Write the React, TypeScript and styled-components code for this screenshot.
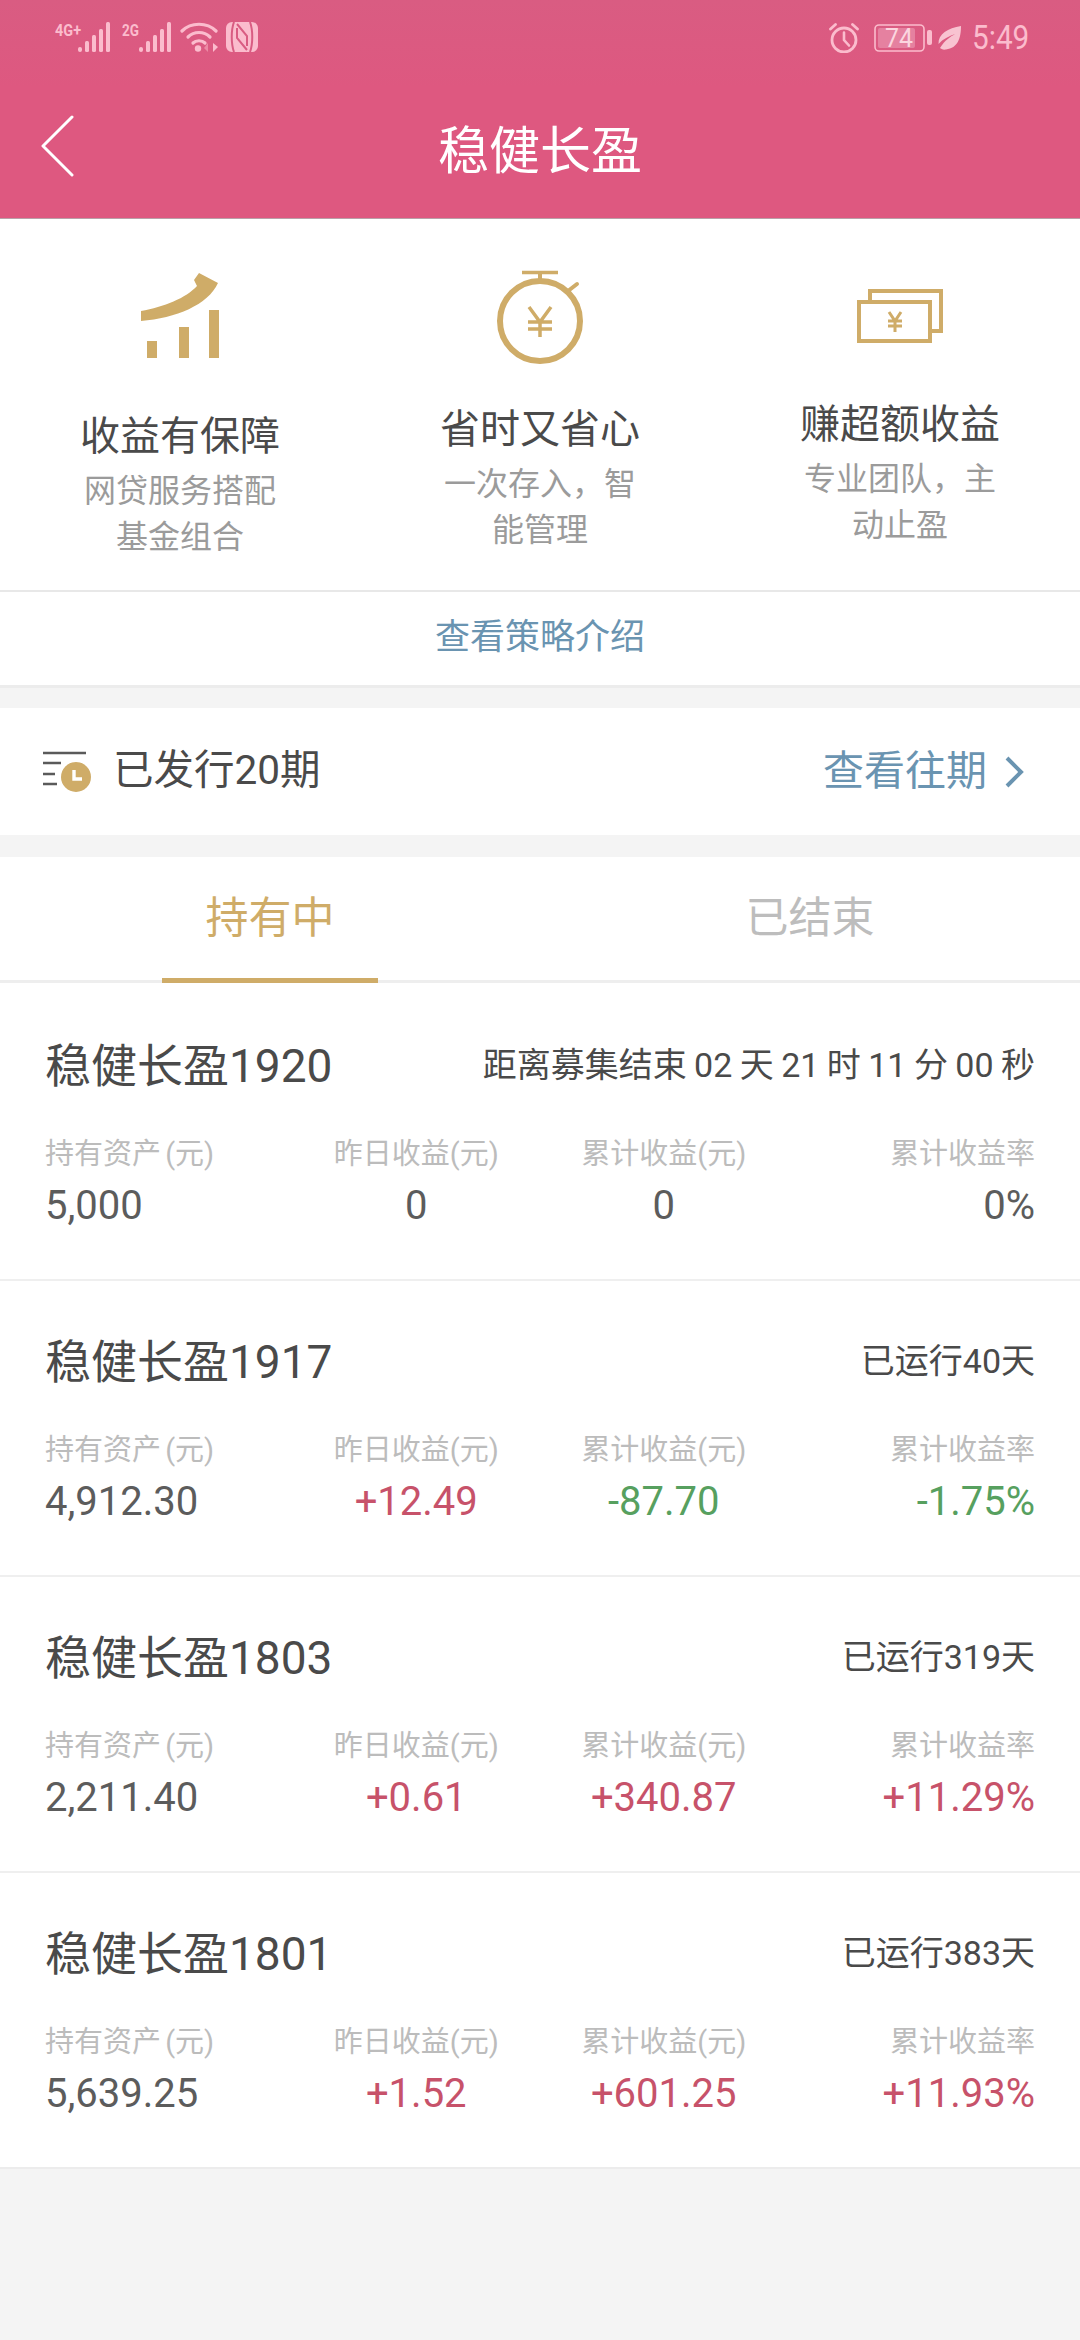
import React from 'react';
import styled, { createGlobalStyle } from 'styled-components';

const GlobalStyle = createGlobalStyle`
  html, body {
    margin: 0;
    padding: 0;
    background: #f4f4f4;
    font-family: Roboto, "Noto Sans CJK SC", sans-serif;
    font-weight: 400;
  }
  * { box-sizing: border-box; }
`;

const GOLD = '#cfac68';
const BLUE = '#6a94b1';
const PINK = '#fbbccd';

const Page = styled.div`
  width: 1080px;
  height: 2340px;
  background: #f4f4f4;
  overflow: hidden;
`;

const Top = styled.header`
  height: 219px;
  background: linear-gradient(#d95c82, #de5880 40%);
  border-bottom: 1px solid #b9a0a8;
`;

const StatusBar = styled.div`
  height: 72px;
  padding: 22px 53px 0 55px;
  display: flex;
  justify-content: space-between;
  align-items: flex-start;
  color: ${PINK};
`;

const StatusGroup = styled.div`
  display: flex;
  align-items: center;
`;

const Clock = styled.span`
  font-size: 33px;
  line-height: 32px;
  display: inline-block;
  width: 55px;
  margin-left: 10px;
  transform: scaleX(0.9);
  transform-origin: left center;
  white-space: nowrap;
`;

const NavBar = styled.div`
  position: relative;
  height: 146px;
  display: flex;
  align-items: center;
  justify-content: center;
`;

const BackIcon = styled.svg`
  position: absolute;
  left: 40px;
  top: 43px;
`;

const NavTitle = styled.h1`
  margin: 13px 0 0;
  font-size: 51px;
  font-weight: 400;
  line-height: 60px;
  color: #fff;
`;

const Intro = styled.section`
  background: #fff;
  border-bottom: 3px solid #ececec;
  margin-bottom: 20px;
`;

const Features = styled.div`
  height: 373px;
  padding-top: 45px;
  display: grid;
  grid-template-columns: repeat(3, 1fr);
  border-bottom: 2px solid #e8e8e8;
`;

const Feature = styled.div`
  display: flex;
  flex-direction: column;
  align-items: center;
`;

const FeatureIcon = styled.div<{ $height: number; $top: number }>`
  height: ${({ $height }) => $height}px;
  padding-top: ${({ $top }) => $top}px;
  display: flex;
  justify-content: center;
  align-items: flex-start;
`;

const FeatureTitle = styled.div`
  font-size: 40px;
  line-height: 52px;
  color: #4a4a4a;
`;

const FeatureText = styled.div`
  width: 200px;
  margin-top: 5px;
  font-size: 32px;
  line-height: 46px;
  text-align: center;
  color: #9b9b9b;
`;

const StrategyLink = styled.div`
  height: 93px;
  padding-bottom: 11px;
  display: flex;
  align-items: center;
  justify-content: center;
  font-size: 35px;
  color: ${BLUE};
`;

const IssueBar = styled.section`
  height: 127px;
  margin-bottom: 22px;
  padding: 0 55px 0 43px;
  background: #fff;
  display: flex;
  align-items: center;
  justify-content: space-between;
`;

const IssueInfo = styled.div`
  display: flex;
  align-items: center;
  font-size: 40.5px;
  color: #4a4a4a;
`;

const IssueText = styled.span`
  margin: 0 0 10px 21px;
`;

const PastLink = styled.div`
  display: flex;
  align-items: center;
  font-size: 41px;
  color: ${BLUE};
`;

const PastText = styled.span`
  margin-bottom: 10px;
`;

const Tabs = styled.div`
  height: 126px;
  background: #fff;
  display: grid;
  grid-template-columns: 1fr 1fr;
  border-bottom: 3px solid #eeeeee;
`;

const Tab = styled.div<{ $active?: boolean }>`
  position: relative;
  display: flex;
  align-items: center;
  justify-content: center;
  padding-bottom: 9px;
  font-size: 43px;
  color: ${({ $active }) => ($active ? GOLD : '#bdbdbd')};
  &::after {
    content: '';
    display: ${({ $active }) => ($active ? 'block' : 'none')};
    position: absolute;
    left: 162px;
    bottom: -3px;
    width: 216px;
    height: 5px;
    background: ${GOLD};
  }
`;

const List = styled.div`
  padding-top: 2px;
  background: #fff;
  border-bottom: 2px solid #ececec;
`;

const Row = styled.article`
  height: 296px;
  padding: 42px 45px 0;
  border-bottom: 2px solid #efefef;
  &:last-child {
    border-bottom: 0;
    height: 294px;
  }
`;

const RowHead = styled.div`
  height: 70px;
  display: flex;
  align-items: center;
  justify-content: space-between;
`;

const RowTitle = styled.div`
  font-size: 46px;
  color: #4a4a4a;
`;

const RowMeta = styled.div`
  font-size: 34px;
  word-spacing: -1px;
  color: #4a4a4a;
`;

const Stats = styled.div`
  margin-top: 37px;
  display: grid;
  grid-template-columns: repeat(4, 1fr);
`;

const Stat = styled.div<{ $align: string }>`
  display: flex;
  flex-direction: column;
  text-align: ${({ $align }) => $align};
`;

const StatLabel = styled.div`
  font-size: 29px;
  line-height: 40px;
  word-spacing: -3px;
  color: #bcbcbc;
`;

const StatValue = styled.div<{ $tone: string }>`
  font-size: 40px;
  line-height: 56px;
  margin-top: 4px;
  color: ${({ $tone }) => $tone};
`;

const GREY = '#5c5c5c';
const RED = '#c7526a';
const GREEN = '#57a05f';

const tone = (v: string) => {
  if (v.startsWith('+')) return RED;
  if (v.startsWith('-')) return GREEN;
  return GREY;
};

const rows = [
  { name: '稳健长盈1920', meta: '距离募集结束 02 天 21 时 11 分 00 秒', values: ['5,000', '0', '0', '0%'] },
  { name: '稳健长盈1917', meta: '已运行40天', values: ['4,912.30', '+12.49', '-87.70', '-1.75%'] },
  { name: '稳健长盈1803', meta: '已运行319天', values: ['2,211.40', '+0.61', '+340.87', '+11.29%'] },
  { name: '稳健长盈1801', meta: '已运行383天', values: ['5,639.25', '+1.52', '+601.25', '+11.93%'] },
];

const labels = ['持有资产 (元)', '昨日收益(元)', '累计收益(元)', '累计收益率'];
const aligns = ['left', 'center', 'center', 'right'];

const Signal = ({ label, width, gap }: { label: string; width: number; gap: number }) => (
  <svg width={width} height="30" viewBox={`0 0 ${width} 30`} style={{ marginRight: gap }}>
    <text x="0" y="14" fontSize="16" fontWeight="700" fontFamily="Roboto, sans-serif" fill={PINK} textLength={label.length > 2 ? 26 : 17} lengthAdjust="spacingAndGlyphs">
      {label}
    </text>
    <g fill={PINK}>
      <rect x={width - 32} y="25" width="4" height="5" rx="2" />
      <rect x={width - 25} y="19" width="4" height="11" rx="1.5" />
      <rect x={width - 18} y="13" width="4" height="17" rx="1.5" />
      <rect x={width - 11} y="7" width="4" height="23" rx="1.5" />
      <rect x={width - 4} y="0" width="4" height="30" rx="1.5" />
    </g>
  </svg>
);

const Wifi = () => (
  <svg width="38" height="30" viewBox="0 0 38 30" style={{ marginRight: 8 }}>
    <g fill="none" stroke={PINK} strokeWidth="3.2" strokeLinecap="round">
      <path d="M2 9C11 0 27 0 36 9" />
      <path d="M8 15C14 9 24 9 30 15" />
      <path d="M13 21C16 18 22 18 25 21" />
    </g>
    <circle cx="18" cy="26.5" r="3.2" fill={PINK} />
    <path d="M33 21v9l5-5z" fill={PINK} />
    <path d="M28 30v-9l-4 5z" fill="#ec8aa5" />
  </svg>
);

const Nfc = () => (
  <svg width="32" height="30" viewBox="0 0 32 30">
    <rect width="32" height="30" rx="6" fill={PINK} />
    <g fill="none" stroke="#d95c82" strokeWidth="2">
      <path d="M8 0C5 8 5 22 8 30M24 0c3 8 3 22 0 30" />
      <path d="M11 2L21 14V24M11 6V16L21 28" />
    </g>
  </svg>
);

const Alarm = () => (
  <svg width="30" height="30" viewBox="0 0 30 30" style={{ marginRight: 15 }}>
    <g fill="none" stroke={PINK} strokeLinecap="round">
      <circle cx="15" cy="17" r="12" strokeWidth="2.8" />
      <path d="M15 9.5V17l5 5.5" strokeWidth="2.6" />
      <path d="M1.5 6l5-4.5M28.5 6l-5-4.5" strokeWidth="2.8" />
    </g>
  </svg>
);

const Battery = () => (
  <svg width="58" height="28" viewBox="0 0 58 28">
    <rect x="1" y="1" width="49" height="26" rx="4" fill="none" stroke={PINK} strokeWidth="1.6" />
    <rect x="4" y="4" width="37" height="20" rx="2" fill="#e581a0" />
    <rect x="53" y="6" width="5" height="15" rx="2" fill={PINK} />
    <text x="25" y="23" fontSize="25" textAnchor="middle" fontFamily="Roboto, sans-serif" fill="#fbd5df" textLength="28" lengthAdjust="spacingAndGlyphs">
      74
    </text>
  </svg>
);

const Leaf = () => (
  <svg width="24" height="24" viewBox="0 0 24 24" style={{ marginLeft: 6 }}>
    <path d="M23 0C23 12 20 22 8 23.5C5 24 3 23 2 22C7 14 12 11 17 8C11 10 5 13 0.500 18C0 8 10 2 23 0Z" fill="#f8c3d1" />
  </svg>
);

const ChartIcon = () => (
  <svg width="80" height="85" viewBox="0 0 80 85">
    <g fill={GOLD}>
      <path d="M1 38C24 34 46 25 57 13L54 7L59 0L78 10C68 32 36 45 1 48Z" />
      <rect x="7" y="68" width="10" height="17" />
      <rect x="39" y="54" width="10" height="31" />
      <rect x="69" y="37" width="10" height="48" />
    </g>
  </svg>
);

const StopwatchIcon = () => (
  <svg width="92" height="96" viewBox="0 0 92 96">
    <g fill="none" stroke={GOLD}>
      <circle cx="46" cy="52" r="40" strokeWidth="6" />
      <path d="M28 3.500H64" strokeWidth="3.500" />
      <path d="M46 3V12" strokeWidth="4" />
      <path d="M74 22L83 15" strokeWidth="4" strokeLinecap="round" />
      <path d="M35 38L46 53L57 38M34 53H58M34 60H58M46 53V68" strokeWidth="3.500" />
    </g>
  </svg>
);

const MoneyIcon = () => (
  <svg width="86" height="54" viewBox="0 0 86 54">
    <g fill="none" stroke={GOLD} strokeWidth="4">
      <path d="M13 12V2H84V42H75" />
      <rect x="2" y="13" width="71" height="39" />
      <path d="M32 23L38 32L44 23M31 32H45M31 37H45M38 32V43" strokeWidth="3" />
    </g>
  </svg>
);

const HistoryIcon = () => (
  <svg width="49" height="42" viewBox="0 0 49 42">
    <g stroke="#5a5a5a" strokeWidth="2.6">
      <path d="M0 2H43" />
      <path d="M0 12H18M0 23H12M0 33H14" />
    </g>
    <circle cx="33" cy="26" r="15" fill={GOLD} />
    <path d="M31 19v9h8" stroke="#fff" strokeWidth="3.400" fill="none" />
  </svg>
);

const Chevron = () => (
  <svg width="20" height="32" viewBox="0 0 20 32" style={{ marginLeft: 18 }}>
    <path d="M2 2L16 16L2 30" fill="none" stroke={BLUE} strokeWidth="4" />
  </svg>
);

export default function App() {
  return (
    <Page>
      <GlobalStyle />
      <Top>
        <StatusBar>
          <StatusGroup>
            <Signal label="4G+" width={55} gap={12} />
            <Signal label="2G" width={49} gap={9} />
            <Wifi />
            <Nfc />
          </StatusGroup>
          <StatusGroup>
            <Alarm />
            <Battery />
            <Leaf />
            <Clock>5:49</Clock>
          </StatusGroup>
        </StatusBar>
        <NavBar>
          <BackIcon width="36" height="62" viewBox="0 0 36 62">
            <path d="M32 2L3 31L32 60" fill="none" stroke="#fff" strokeWidth="3" strokeLinecap="round" strokeLinejoin="round" />
          </BackIcon>
          <NavTitle>稳健长盈</NavTitle>
        </NavBar>
      </Top>
      <Intro>
        <Features>
          <Feature>
            <FeatureIcon $height={147} $top={9}><ChartIcon /></FeatureIcon>
            <FeatureTitle>收益有保障</FeatureTitle>
            <FeatureText>网贷服务搭配基金组合</FeatureText>
          </Feature>
          <Feature>
            <FeatureIcon $height={140} $top={5}><StopwatchIcon /></FeatureIcon>
            <FeatureTitle>省时又省心</FeatureTitle>
            <FeatureText>一次存入，智能管理</FeatureText>
          </Feature>
          <Feature>
            <FeatureIcon $height={135} $top={25}><MoneyIcon /></FeatureIcon>
            <FeatureTitle>赚超额收益</FeatureTitle>
            <FeatureText>专业团队，主动止盈</FeatureText>
          </Feature>
        </Features>
        <StrategyLink>查看策略介绍</StrategyLink>
      </Intro>
      <IssueBar>
        <IssueInfo>
          <HistoryIcon />
          <IssueText>已发行20期</IssueText>
        </IssueInfo>
        <PastLink>
          <PastText>查看往期</PastText>
          <Chevron />
        </PastLink>
      </IssueBar>
      <Tabs>
        <Tab $active>持有中</Tab>
        <Tab>已结束</Tab>
      </Tabs>
      <List>
        {rows.map(row => (
          <Row key={row.name}>
            <RowHead>
              <RowTitle>{row.name}</RowTitle>
              <RowMeta>{row.meta}</RowMeta>
            </RowHead>
            <Stats>
              {row.values.map((v, i) => (
                <Stat key={labels[i]} $align={aligns[i]}>
                  <StatLabel>{labels[i]}</StatLabel>
                  <StatValue $tone={tone(v)}>{v}</StatValue>
                </Stat>
              ))}
            </Stats>
          </Row>
        ))}
      </List>
    </Page>
  );
}
